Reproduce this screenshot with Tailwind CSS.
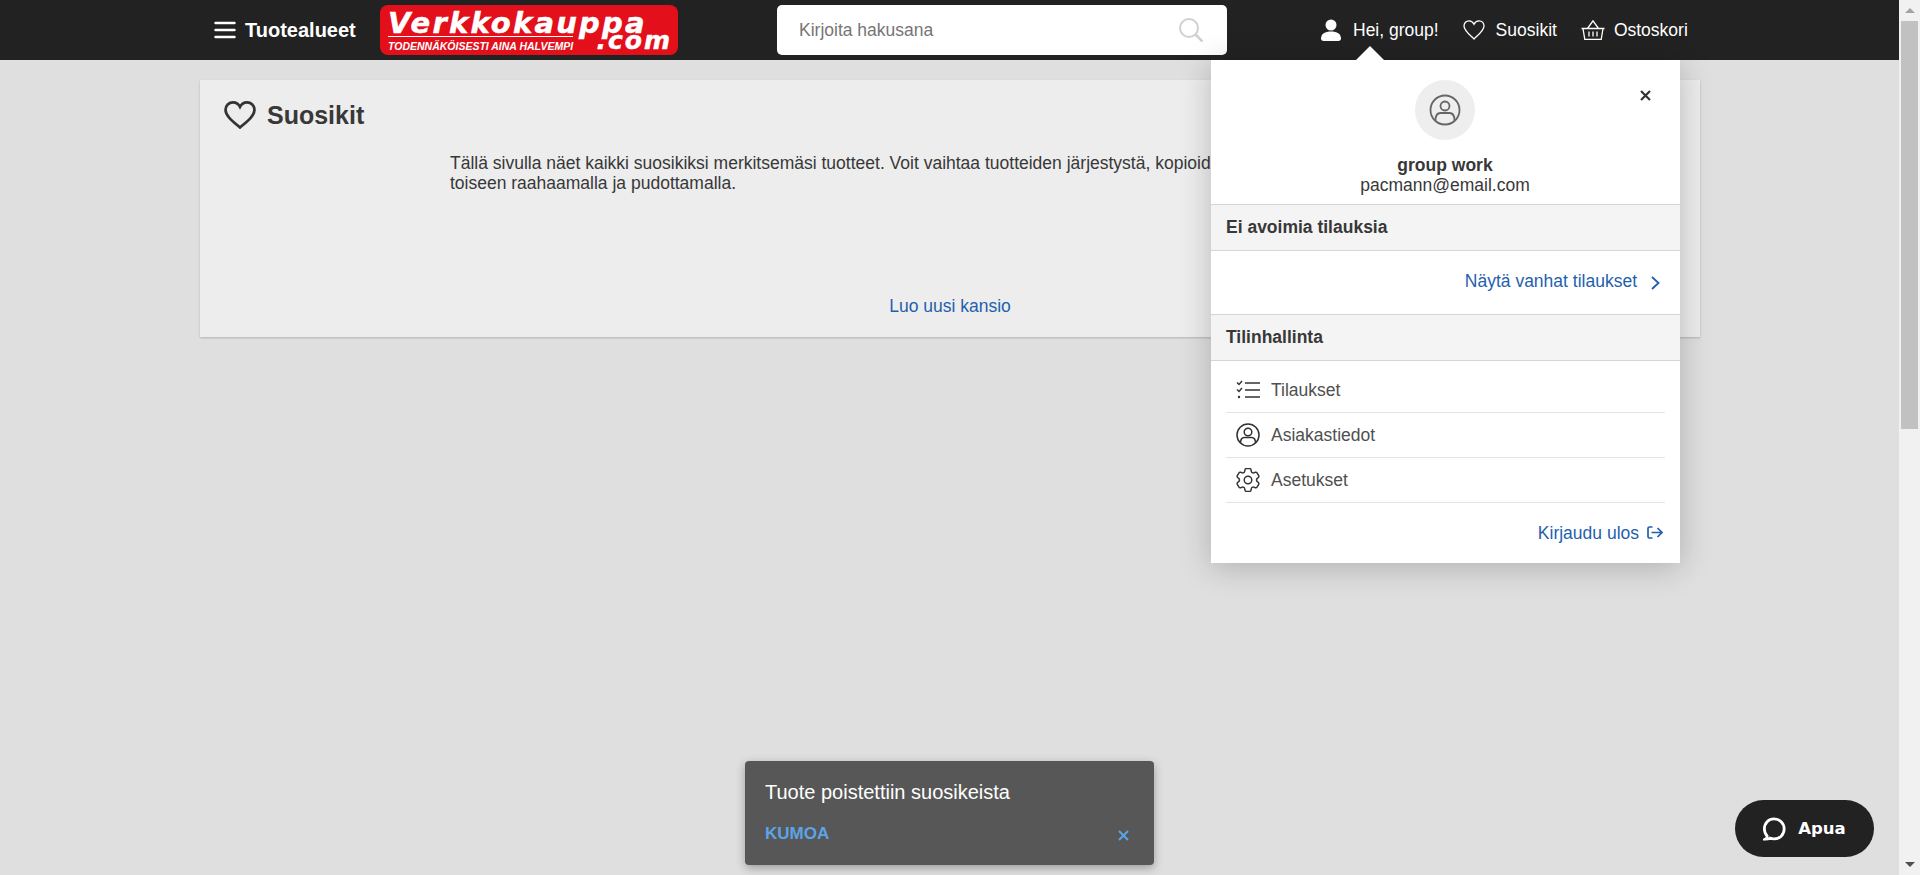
<!DOCTYPE html>
<html lang="fi">
<head>
    <meta charset="UTF-8">
    <title>Suosikit</title>
    <script src="https://cdn.jsdelivr.net/npm/@tailwindcss/browser@4"></script>
</head>
<body class="h-[875px] overflow-hidden flex bg-[#dfdfdf] font-['Liberation_Sans',Arial,sans-serif] text-[#383838]">

    <div class="relative w-[1899px] h-[875px] flex flex-col">
        <!-- top bar -->
        <header class="h-[60px] bg-[#222] flex items-center text-white">
            <div class="ml-[214px] w-[166px] flex items-center">
                <svg width="22" height="18" viewBox="0 0 22 18" class="mr-[9px]" fill="none" stroke="#fff" stroke-width="2.4" stroke-linecap="round"><path d="M1.5 2h19M1.5 9h19M1.5 16h19"/></svg>
                <span class="font-bold text-[20px]">Tuotealueet</span>
            </div>

            <!-- logo -->
            <div class="relative w-[298px] h-[50px] bg-[#e30f1b] rounded-[8px] pl-[8px] pt-[5px] text-white">
                <div class="font-['DejaVu_Sans',sans-serif] font-bold italic text-[29px] leading-[27px] tracking-[2.2px] [-webkit-text-stroke:0.5px_white]">Verkkokauppa</div>
                <div class="h-[1px] w-[185px] bg-white -mt-[1px]"></div>
                <div class="font-bold italic text-[10.5px] leading-[12px] mt-[3px]">TODENNÄKÖISESTI AINA HALVEMPI</div>
                <div class="absolute right-[6px] bottom-[2px] font-['DejaVu_Sans',sans-serif] font-bold italic text-[25px] leading-[24px] tracking-[2px] [-webkit-text-stroke:0.5px_white]">.com</div>
            </div>

            <!-- search -->
            <div class="ml-[99px] w-[450px] h-[50px] bg-white rounded-[5px] flex items-center justify-between pl-[22px] pr-[24px]">
                <span class="text-[#757575] text-[17.5px]">Kirjoita hakusana</span>
                <svg width="24" height="24" viewBox="0 0 24 24" fill="none" stroke="#d0d0d0" stroke-width="2"><circle cx="10" cy="10" r="9"/><path d="M16.500 16.500l7 7" stroke-width="2.600"/></svg>
            </div>

            <!-- user links -->
            <div class="ml-[94px] flex items-center text-[17.5px]">
                <svg width="20" height="22" viewBox="0 0 20 22" fill="#fff" class="mr-[12px]"><circle cx="10" cy="6" r="5.500"/><path d="M0 19.500C0 15 4 12.500 10 12.500s10 2.500 10 7c0 1.500-1 2.500-2.500 2.500h-15C1 22 0 21 0 19.500z"/></svg>
                <span>Hei, group!</span>
                <svg width="22" height="20" viewBox="0 0 22 20" fill="none" stroke="#fff" stroke-width="1.300" class="ml-[24px] mr-[11px]"><path d="M11 19C6.500 14.500 1 10.500 1 6 1 3 3.200.8 6 .8 8.200.8 10 2.200 11 4.200 12 2.200 13.800.8 16 .8 18.800.8 21 3 21 6 21 10.500 15.500 14.500 11 19z"/></svg>
                <span>Suosikit</span>
                <svg width="24" height="20" viewBox="0 0 24 20" fill="none" stroke="#fff" stroke-width="1.300" class="ml-[24px] mr-[9px]"><path d="M0.500 8.500h23M2 8.500l1.800 11h16.400l1.800-11M6.500 8.500L12 .8l5.500 7.700M8 11.500v5M12 11.500v5M16 11.500v5"/></svg>
                <span>Ostoskori</span>
            </div>
        </header>

        <!-- page content -->
        <main class="pt-[20px] pl-[200px] pr-[199px]">
            <section class="relative h-[257px] bg-[#ededed] shadow-[0_1px_2px_rgba(0,0,0,0.2)] pt-[19px]">
                <div class="flex items-center pl-[24px]">
                    <svg width="32" height="28" viewBox="0 0 33 29" fill="none" stroke="#333" stroke-width="2.800"><path d="M16.500 27.500C9 21 1.500 15.500 1.500 9 1.500 4.700 5 1.500 9.200 1.500c3.100 0 5.800 1.700 7.300 4.600 1.500-2.900 4.200-4.600 7.300-4.600 4.200 0 7.700 3.200 7.700 7.500C31.500 15.500 24 21 16.500 27.500z"/></svg>
                    <h1 class="ml-[11px] mt-[1px] text-[25px] font-bold leading-[30px]">Suosikit</h1>
                </div>
                <p class="ml-[250px] mt-[23px] text-[17.5px] leading-[20px]">Tällä sivulla näet kaikki suosikiksi merkitsemäsi tuotteet. Voit vaihtaa tuotteiden järjestystä, kopioida ja siirtää tuotteita kansiosta<br>toiseen raahaamalla ja pudottamalla.</p>
                <a class="absolute bottom-[21px] left-0 right-0 text-center text-[17.5px] leading-[19px] text-[#1f5fae]">Luo uusi kansio</a>
            </section>
        </main>

        <!-- account menu -->
        <div class="absolute left-[1211px] top-[60px] w-[469px] h-[503px] bg-white shadow-[0_4px_30px_rgba(0,0,0,0.22)] flex flex-col">
            <div class="absolute left-[145px] -top-[14px] w-0 h-0 border-x-[14px] border-x-transparent border-b-[14px] border-b-white"></div>
            <button class="absolute right-[29px] top-[30px]">
                <svg width="11" height="11" viewBox="0 0 11 11" stroke="#333" stroke-width="2.200" class="block"><path d="M1 1l9 9M10 1l-9 9"/></svg>
            </button>
            <div class="h-[144px] flex flex-col items-center pt-[20px] pr-[1px]">
                <div class="w-[60px] h-[60px] rounded-full bg-[#eee] flex items-center justify-center">
                    <svg width="32" height="32" viewBox="0 0 32 32" fill="none" stroke="#666" stroke-width="1.800"><circle cx="16" cy="16" r="14.500"/><circle cx="16" cy="12" r="4.500"/><path d="M6.500 26.500c0-6 3-7.500 5-7.500h9c2 0 5 1.500 5 7.500"/></svg>
                </div>
                <div class="mt-[15px] text-[17.5px] leading-[20px] font-bold">group work</div>
                <div class="text-[17.5px] leading-[20px]">pacmann@email.com</div>
            </div>
            <div class="h-[47px] bg-[#f4f4f4] border-y border-[#d5d5d5] flex items-center pl-[15px] text-[17.5px] font-bold">Ei avoimia tilauksia</div>
            <div class="h-[63px] flex items-center justify-end pr-[20px] text-[17.5px] text-[#1f5fae]">
                <span class="-mt-[3px]">Näytä vanhat tilaukset</span>
                <svg width="9" height="14" viewBox="0 0 9 14" fill="none" stroke="#1f5fae" stroke-width="1.800" class="ml-[14px]"><path d="M1 1l6.500 6L1 13"/></svg>
            </div>
            <div class="h-[47px] bg-[#f4f4f4] border-y border-[#d5d5d5] flex items-center pl-[15px] text-[17.5px] font-bold">Tilinhallinta</div>
            <ul class="mx-[15px] mt-[7px] text-[17.5px] text-[#505050]">
                <li class="h-[45px] border-b border-[#e4e4e4] flex items-center pl-[10px]">
                    <svg width="24" height="20" viewBox="0 0 24 20" fill="none" stroke="#333" stroke-width="1.400" class="mr-[11px]"><path d="M1 2.500l2 2 3-3.500M1 9.500l2 2 3-3.500M9 3h15M9 10h15M9 17h15"/><circle cx="3" cy="17" r="1.200" fill="#333" stroke="none"/></svg>
                    <span>Tilaukset</span>
                </li>
                <li class="h-[45px] border-b border-[#e4e4e4] flex items-center pl-[10px]">
                    <svg width="24" height="24" viewBox="0 0 24 24" fill="none" stroke="#333" stroke-width="1.500" class="mr-[11px]"><circle cx="12" cy="12" r="11"/><circle cx="12" cy="9" r="3.800"/><path d="M4.500 20c0-4 2-5.500 4-5.500h7c2 0 4 1.500 4 5.500"/></svg>
                    <span>Asiakastiedot</span>
                </li>
                <li class="h-[45px] border-b border-[#e4e4e4] flex items-center pl-[10px]">
                    <svg width="24" height="24" viewBox="2.500 2.500 19 19" fill="none" stroke="#333" stroke-width="1.150" stroke-linejoin="round" class="mr-[11px]"><path d="M9.594 3.940c.09-.542.56-.94 1.110-.94h2.593c.55 0 1.020.398 1.110.94l.213 1.281c.063.374.313.686.645.870.074.040.147.083.22.127.325.196.72.257 1.075.124l1.217-.456a1.125 1.125 0 0 1 1.370.49l1.296 2.247a1.125 1.125 0 0 1-.26 1.431l-1.003.827c-.293.241-.438.613-.43.992a7.723 7.723 0 0 1 0 .255c-.008.378.137.75.43.991l1.004.827c.424.35.534.955.26 1.430l-1.298 2.247a1.125 1.125 0 0 1-1.369.491l-1.217-.456c-.355-.133-.75-.072-1.076.124a6.470 6.470 0 0 1-.22.128c-.331.183-.581.495-.644.869l-.213 1.281c-.09.543-.56.94-1.110.94h-2.594c-.55 0-1.019-.398-1.110-.94l-.213-1.281c-.062-.374-.312-.686-.644-.87a6.520 6.520 0 0 1-.22-.127c-.325-.196-.72-.257-1.076-.124l-1.217.456a1.125 1.125 0 0 1-1.369-.49l-1.297-2.247a1.125 1.125 0 0 1 .26-1.431l1.004-.827c.292-.24.437-.613.43-.991a6.932 6.932 0 0 1 0-.255c.007-.38-.138-.751-.43-.992l-1.004-.827a1.125 1.125 0 0 1-.26-1.430l1.297-2.247a1.125 1.125 0 0 1 1.370-.491l1.216.456c.356.133.751.072 1.076-.124.072-.044.146-.086.22-.128.332-.183.582-.495.644-.869l.214-1.280Z"/><circle cx="12" cy="12" r="3"/></svg>
                    <span>Asetukset</span>
                </li>
            </ul>
            <div class="h-[59px] pt-[2px] flex items-center justify-end pr-[17px] text-[17.5px] text-[#1f5fae]">
                <span>Kirjaudu ulos</span>
                <svg width="16" height="13" viewBox="0 0 16 13" fill="none" stroke="#1f5fae" stroke-width="1.700" class="ml-[8px] -mt-[2px]"><path d="M5.500 1H2.500C1.500 1 1 1.500 1 2.500v8c0 1 .5 1.500 1.500 1.500h3M4.500 6.500H15M10.500 2l4.500 4.500L10.500 11"/></svg>
            </div>
        </div>

        <!-- toast -->
        <div class="absolute left-[745px] top-[761px] w-[409px] h-[104px] bg-[#575757] rounded-[4px] shadow-[0_3px_10px_rgba(0,0,0,0.3)] text-white">
            <div class="pl-[20px] pt-[20px] text-[20px] leading-[23px]">Tuote poistettiin suosikeista</div>
            <div class="flex items-center justify-between pl-[20px] pr-[25px] mt-[20px]">
                <a class="text-[17px] leading-[20px] font-bold text-[#5ba4e5]">KUMOA</a>
                <svg width="11" height="11" viewBox="0 0 11 11" stroke="#5ba4e5" stroke-width="2" class="mt-[3px]"><path d="M1 1l9 9M10 1l-9 9"/></svg>
            </div>
        </div>

        <!-- help button -->
        <button class="absolute left-[1735px] top-[800px] w-[139px] h-[57px] rounded-full bg-[#222] text-white flex items-center justify-center">
            <svg width="23" height="24" viewBox="0 0 25 26" fill="none" stroke="#fff" stroke-width="3" stroke-linecap="round" class="mr-[12px]"><path d="M2.500 24c2.500 0 4-.5 5-1.200 1.500.7 3 1 4.500 1 6 0 11-4.500 11-10.800S18 2 12 2 1.500 6.500 1.500 13c0 3 1 5.500 3 7.500 0 1.500-.8 2.800-2 3.500z"/></svg>
            <span class="mt-[2px] font-['DejaVu_Sans',sans-serif] font-bold text-[16.5px]">Apua</span>
        </button>
    </div>

    <!-- window scrollbar -->
    <div class="w-[21px] h-[875px] bg-[#f1f1f1] flex flex-col items-center">
        <div class="h-[21px] w-full flex items-center justify-center"><div class="w-0 h-0 border-x-[5px] border-x-transparent border-b-[5px] border-b-[#a3a3a3]"></div></div>
        <div class="h-[408px] w-[17px] bg-[#c1c1c1]"></div>
        <div class="flex-1"></div>
        <div class="h-[21px] w-full flex items-center justify-center"><div class="w-0 h-0 border-x-[5px] border-x-transparent border-t-[5px] border-t-[#505050]"></div></div>
    </div>
</body>
</html>
